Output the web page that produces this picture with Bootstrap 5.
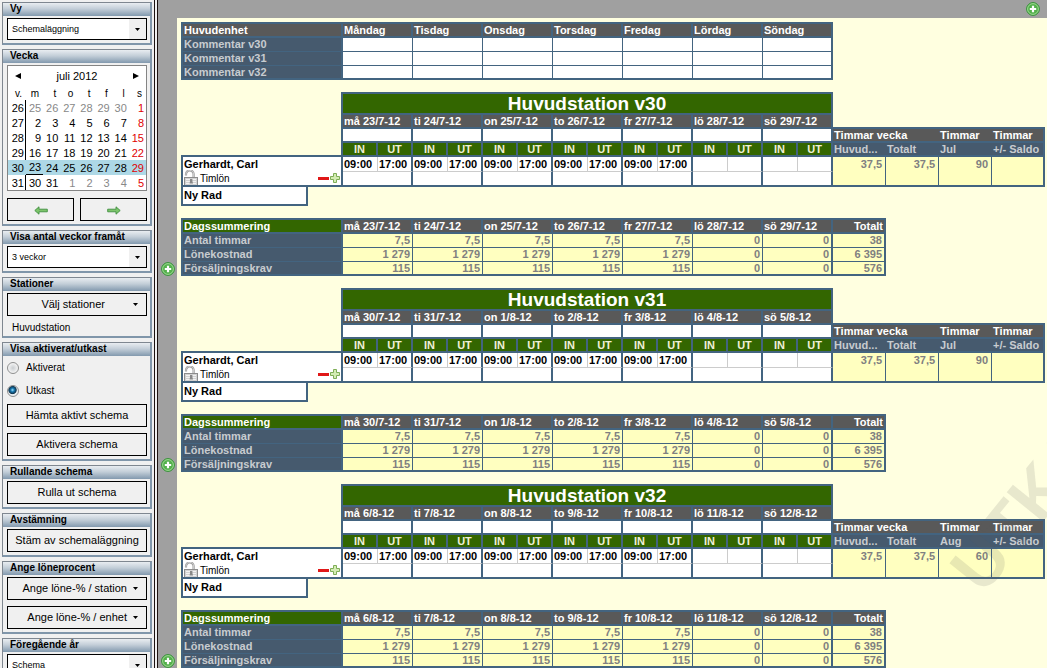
<!DOCTYPE html>
<html lang="sv">
<head>
<meta charset="utf-8">
<meta name="viewport" content="width=device-width, initial-scale=1">
<title>Schemaläggning</title>
<link href="https://cdn.jsdelivr.net/npm/bootstrap@5.3.0/dist/css/bootstrap.min.css" rel="stylesheet">
<style>
:root { --line:#436480; --head:#595959; --label:#465a6e; --green:#336600; }
body { font:11px/12px "Liberation Sans", Arial, sans-serif; color:#000; background:#a0a0a0; }

/* sidebar */
.side { width:158px; background:#f0f0f0; padding:2px 2px 0 2px; border-right:4px double #1c1210; gap:4px; overflow:hidden; }
.panel { flex:none; border:1px solid #7f8790; border-bottom:2px solid #8096aa; border-right:2px solid #8096aa; padding:0 3px 3px 4px; }
.panel h2 { font-size:10px; line-height:12px; font-weight:bold; height:13px; margin:0 -3px 2px -4px; padding-left:7px;
  background:linear-gradient(#e9edf1, #c3ced8 45%, #8299ae); }
.box, .pick { display:block; width:100%; height:23px; border:1px solid #000; border-radius:0; background:#f0f0f0; color:#000; padding:0; line-height:21px; font-size:11px; text-align:center; }
.pick { appearance:none; height:22px; font-size:9px; line-height:20px; text-align:left; padding-left:4px;
  background:linear-gradient(#f0f0f0,#f0f0f0) right 0 top 0/17px 100% no-repeat #fff; }
.pick-wrap { position:relative; }
.pick-wrap svg { position:absolute; right:7px; top:10px; pointer-events:none; }
.box.drop { display:flex; align-items:center; justify-content:flex-end; gap:6px; padding-right:8px; }
.box.wide-gap { gap:28px; }
.box + .box { margin-top:6px; }
.station-name { font-size:10px; line-height:11px; padding:6px 0 0 5px; }
.opt { height:19px; margin-bottom:4px; font-size:10px; gap:7px; }
.opt input { appearance:none; width:12px; height:12px; margin:0; border:1px solid #8e8f8f; border-radius:50%; background:radial-gradient(#c9cdd0, #f4f4f4 70%); }
.opt input:checked { background:radial-gradient(circle at 45% 40%, #9fe3ff 0, #1778b0 22%, #10354e 46%, #e8edf0 56%); }
.cal { border:1px solid #848484; background:#fff; margin:1px 0 7px; }
.cal-top { height:20px; padding:0 7px; }
.cal-top button { border:0; background:none; padding:0; line-height:0; }
.cal table { width:100%; table-layout:fixed; border-collapse:separate; border-spacing:0; }
.cal col:first-child { width:18px; }
.cal td, .cal th { height:15px; padding:0 2px 0 0; line-height:14px; text-align:right; font-weight:normal; }
.cal thead th { height:14px; font-size:10px; line-height:13px; padding-right:4px; }
.cal tbody th { border-right:1px solid #000; padding-right:1px; }
.cal .off { color:#888; }
.cal td.sun { color:#e00000; }
.cal .current > * { background:#add8e6; }
.cal .current th { border-color:#add8e6; }
.cal .today { border-bottom:1px solid #000; }

/* schedule */
.pane { min-width:0; overflow:hidden; position:relative; }
.topbar { height:18px; padding:2px 7px 0 0; flex:none; }
.topbar button, .fold button, .rowact { border:0; background:none; padding:0; line-height:0; }
.sheet { margin-left:19px; background:#ffffe0; padding:4px 0 12px 4px; }
.week { margin-top:12px; }
.grid { table-layout:fixed; border-collapse:separate; border-spacing:0; width:0; font-weight:bold; }
.grid td, .grid th { height:14px; padding:0 1px; line-height:12px; white-space:nowrap; overflow:hidden; border:0 solid var(--line); vertical-align:top; }
.framed { border:solid var(--line); border-width:2px 0 0 2px; }
.framed td, .framed th { border-width:0 1px 1px 0; }
.framed th, .framed thead td { border-width:0 2px 2px 0; }
.framed tbody th { border-bottom-width:1px; background:var(--label); color:#c8ccd0; }
.framed tbody tr:last-child > * { border-bottom-width:2px; }
.framed tr > :last-child, .framed .lastday { border-right-width:2px; }
.grid .hd { background:var(--head); color:#fff; }
.grid .gr { background:var(--green); color:#fff; }
.notes td { background:#fff; }
.sums { position:relative; margin-top:12px; }
.sums td { background:#ffffc0; color:#808080; text-align:right; padding-right:2px; }
.sums th:last-child { text-align:right; }
.fold { position:absolute; left:-20px; bottom:0; line-height:0; }
.shift td, .shift th { border-width:0 2px 2px 0; background:#fff; }
.shift .blank { background:none; }
.shift .title { height:23px; border-top-width:2px; font-size:19px; line-height:19px; text-align:center; }
.shift .gr.io { text-align:center; color:#f0f0d8; }
.shift .sub { background:var(--label); color:#c8ccd0; border-right-width:0; }
.shift .hd.flat { border-right-width:0; }
.shift .edge { border-right-width:2px !important; }
.shift .time { height:15px; line-height:14px; border-width:0 2px 1px 0; border-bottom-color:#ccc; }
.shift .time.in { border-right-width:1px; border-right-color:#ccc; padding-right:2px; }
.shift .low { height:15px; }
.shift .who { border-left-width:2px; line-height:14px; vertical-align:top; }
.shift .sum { background:#ffffc0; color:#808080; border-right-width:1px; text-align:right; line-height:14px; padding-right:3px; }
.terms { font-size:10px; font-weight:normal; line-height:14px; height:14px; }
.terms .wage { padding:1px 0 0 2px; }
.newrow { display:block; width:127px; height:19px; border:2px solid var(--line); border-top:0; border-radius:0; background:#fff; color:#000; padding:0 1px; text-align:left; font-weight:bold; line-height:17px; }
.draft { position:absolute; right:-220px; top:534px; font-size:68px; line-height:68px; font-weight:bold; color:rgba(90,90,90,.14); transform-origin:0 100%; transform:rotate(-51deg); pointer-events:none; }
</style>
</head>
<body>
<svg class="d-none" aria-hidden="true">
  <symbol id="add" viewBox="0 0 14 14"><circle cx="7" cy="7" r="6.4" fill="#54b04c" stroke="#38913a"/><circle cx="7" cy="7" r="5.4" fill="none" stroke="#a5dc98" stroke-width=".9"/><path d="M7 3.8v6.4M3.8 7h6.4" stroke="#fff" stroke-width="2.2"/></symbol>
  <symbol id="caret" viewBox="0 0 5 3"><path d="M0 0h5L2.5 3z"/></symbol>
  <symbol id="arrow" viewBox="0 0 14 9"><path d="M.8 4.5 5 .8v2.4h8.3v2.6H5v2.4z" fill="#7cc46a" stroke="#3f8f3f" stroke-width=".9"/></symbol>
  <symbol id="lock" viewBox="0 0 14 16"><path d="M2 5.5V4.5a3.7 3.7 0 0 1 7.6-.5v3.5" fill="none" stroke="#999" stroke-width="2.2"/><path d="M2 5.5V4.5a3.7 3.7 0 0 1 7.6-.5v3.5" fill="none" stroke="#ddd" stroke-width=".8"/><rect x=".5" y="7.5" width="13" height="8" fill="#d2d2d2" stroke="#8c8c8c"/><path d="M2 9.5h10M2 11.5h10M2 13.5h10" stroke="#f2f2f2"/><path d="M6 9h2.4v2l.6 2.6H5.6L6 11z" fill="#888"/></symbol>
  <symbol id="plus" viewBox="0 0 10 10"><path d="M3.5.5h3v3h3v3h-3v3h-3v-3h-3v-3h3z" fill="#d4ecb4" stroke="#7fae57"/></symbol>
</svg>
<div class="d-flex vh-100 overflow-hidden">
  <aside class="side d-flex flex-column flex-shrink-0">
    <section class="panel"><h2><label for="view">Vy</label></h2>
      <div class="pick-wrap"><select class="pick" id="view"><option>Schemaläggning</option></select><svg width="5" height="3"><use href="#caret"/></svg></div>
    </section>
    <section class="panel"><h2>Vecka</h2>
      <div class="cal">
        <div class="cal-top d-flex align-items-center justify-content-between">
          <button aria-label="Föregående månad"><svg width="6" height="6"><path d="M6 0v6L0 3z"/></svg></button><span>juli 2012</span><button aria-label="Nästa månad"><svg width="6" height="6"><path d="M0 0v6l6-3z"/></svg></button>
        </div>
        <table><colgroup><col><col span="7"></colgroup>
          <thead><tr><th>v.</th><th>m</th><th>t</th><th>o</th><th>t</th><th>f</th><th>l</th><th>s</th></tr></thead>
          <tbody id="days"></tbody></table>
      </div>
      <div class="d-flex" style="gap:6px"><button class="box" aria-label="Föregående vecka"><svg width="14" height="9"><use href="#arrow"/></svg></button><button class="box mt-0" aria-label="Nästa vecka"><svg width="14" height="9"><g transform="matrix(-1 0 0 1 14 0)"><use href="#arrow"/></g></svg></button></div>
    </section>
    <section class="panel"><h2><label for="span">Visa antal veckor framåt</label></h2>
      <div class="pick-wrap"><select class="pick" id="span"><option>3 veckor</option></select><svg width="5" height="3"><use href="#caret"/></svg></div>
    </section>
    <section class="panel"><h2>Stationer</h2>
      <button class="box drop wide-gap"><span>Välj stationer</span><svg width="5" height="3"><use href="#caret"/></svg></button>
      <div class="station-name">Huvudstation</div>
    </section>
    <section class="panel"><h2>Visa aktiverat/utkast</h2>
      <label class="opt d-flex align-items-center"><input type="radio" name="mode">Aktiverat</label>
      <label class="opt d-flex align-items-center"><input type="radio" name="mode" checked>Utkast</label>
      <button class="box">Hämta aktivt schema</button>
      <button class="box">Aktivera schema</button>
    </section>
    <section class="panel"><h2>Rullande schema</h2><button class="box">Rulla ut schema</button></section>
    <section class="panel"><h2>Avstämning</h2><button class="box">Stäm av schemaläggning</button></section>
    <section class="panel"><h2>Ange löneprocent</h2>
      <button class="box drop"><span>Ange löne-% / station</span><svg width="5" height="3"><use href="#caret"/></svg></button>
      <button class="box drop"><span>Ange löne-% / enhet</span><svg width="5" height="3"><use href="#caret"/></svg></button>
    </section>
    <section class="panel"><h2><label for="prev">Föregående år</label></h2>
      <div class="pick-wrap"><select class="pick" id="prev"><option>Schema</option></select><svg width="5" height="3"><use href="#caret"/></svg></div>
    </section>
  </aside>
  <main class="pane flex-grow-1 d-flex flex-column">
    <div class="topbar text-end"><button aria-label="Lägg till"><svg width="14" height="14"><use href="#add"/></svg></button></div>
    <div class="sheet flex-grow-1">
      <table class="grid framed notes" id="notes"></table>
      <div id="weeks"></div>
    </div>
    <div class="draft">UTKAST</div>
  </main>
</div>
<script>
const rep = (n, f) => Array.from({length:n}, (_, i) => f(i)).join('');

document.getElementById('days').innerHTML = [
  [26,25,26,27,28,29,30,1],[27,2,3,4,5,6,7,8],[28,9,10,11,12,13,14,15],
  [29,16,17,18,19,20,21,22],[30,23,24,25,26,27,28,29],[31,30,31,1,2,3,4,5]
].map(([w, ...d]) => `<tr class="${w === 30 ? 'current' : ''}"><th>${w}</th>` + d.map((n, i) => {
  const off = (w === 26 && n > 20) || (w === 31 && n < 20);
  return `<td class="${i === 6 ? 'sun' : off ? 'off' : ''}${n === 23 ? ' today' : ''}">${n}</td>`;
}).join('') + '</tr>').join('');

document.getElementById('notes').innerHTML =
  '<colgroup><col width="160"><col width="70" span="7"></colgroup><thead><tr><th class="hd">Huvudenhet</th>' +
  ['Måndag','Tisdag','Onsdag','Torsdag','Fredag','Lördag','Söndag'].map(d => `<th class="hd">${d}</th>`).join('') +
  '</tr></thead><tbody>' + [30,31,32].map(w => `<tr><th>Kommentar v${w}</th>${'<td></td>'.repeat(7)}</tr>`).join('') + '</tbody>';

const weeks = [
  {no:30, month:'Jul', hours:90, days:['må 23/7-12','ti 24/7-12','on 25/7-12','to 26/7-12','fr 27/7-12','lö 28/7-12','sö 29/7-12']},
  {no:31, month:'Jul', hours:90, days:['må 30/7-12','ti 31/7-12','on 1/8-12','to 2/8-12','fr 3/8-12','lö 4/8-12','sö 5/8-12']},
  {no:32, month:'Aug', hours:60, days:['må 6/8-12','ti 7/8-12','on 8/8-12','to 9/8-12','fr 10/8-12','lö 11/8-12','sö 12/8-12']}
];
const sums = [['Antal timmar','7,5','38'],['Lönekostnad','1 279','6 395'],['Försäljningskrav','115','576']];

document.getElementById('weeks').innerHTML = weeks.map(w => `
<section class="week">
  <table class="grid shift">
    <colgroup><col width="162"><col width="35" span="14"><col width="53" span="4"></colgroup>
    <tr><td class="blank" rowspan="4"></td><th class="gr title" colspan="14">Huvudstation v${w.no}</th><td class="blank" style="border-right-width:0" colspan="4" rowspan="2"></td></tr>
    <tr>${w.days.map(d => `<th class="hd" colspan="2">${d}</th>`).join('')}</tr>
    <tr>${'<td colspan="2"></td>'.repeat(7)}<th class="hd flat" colspan="2">Timmar vecka</th><th class="hd flat">Timmar</th><th class="hd edge">Timmar</th></tr>
    <tr>${'<th class="gr io">IN</th><th class="gr io">UT</th>'.repeat(7)}<th class="sub">Huvud...</th><th class="sub">Totalt</th><th class="sub">${w.month}</th><th class="sub edge">+/- Saldo</th></tr>
    <tr><td class="who" rowspan="2">Gerhardt, Carl
      <div class="terms d-flex align-items-center"><svg width="14" height="16"><use href="#lock"/></svg><span class="wage flex-grow-1">Timlön</span>
      <button class="rowact" aria-label="Ta bort rad"><svg width="12" height="10"><path d="M0 4h11v3H0z" fill="#e01818"/></svg></button><button class="rowact" aria-label="Lägg till rad"><svg width="10" height="10"><use href="#plus"/></svg></button></div></td>
      ${rep(7, i => `<td class="time in">${i < 5 ? '09:00' : ''}</td><td class="time">${i < 5 ? '17:00' : ''}</td>`)}
      <td class="sum" rowspan="2">37,5</td><td class="sum" rowspan="2">37,5</td><td class="sum" rowspan="2">${w.hours}</td><td class="sum edge" rowspan="2"></td></tr>
    <tr>${'<td class="low" colspan="2"></td>'.repeat(7)}</tr>
  </table>
  <button class="newrow">Ny Rad</button>
  <div class="sums">
    <table class="grid framed">
      <colgroup><col width="160"><col width="70" span="7"><col width="53"></colgroup>
      <thead><tr><th class="gr">Dagssummering</th>${w.days.map(d => `<th class="hd">${d}</th>`).join('')}<th class="hd">Totalt</th></tr></thead>
      <tbody>${sums.map(([n, v, t]) => `<tr><th>${n}</th>${rep(7, i => `<td class="${i === 6 ? 'lastday' : ''}">${i < 5 ? v : 0}</td>`)}<td>${t}</td></tr>`).join('')}</tbody>
    </table>
    <div class="fold"><button aria-label="Lägg till"><svg width="14" height="14"><use href="#add"/></svg></button></div>
  </div>
</section>`).join('');
</script>
<script src="https://cdn.jsdelivr.net/npm/bootstrap@5.3.0/dist/js/bootstrap.bundle.min.js"></script>
</body>
</html>
